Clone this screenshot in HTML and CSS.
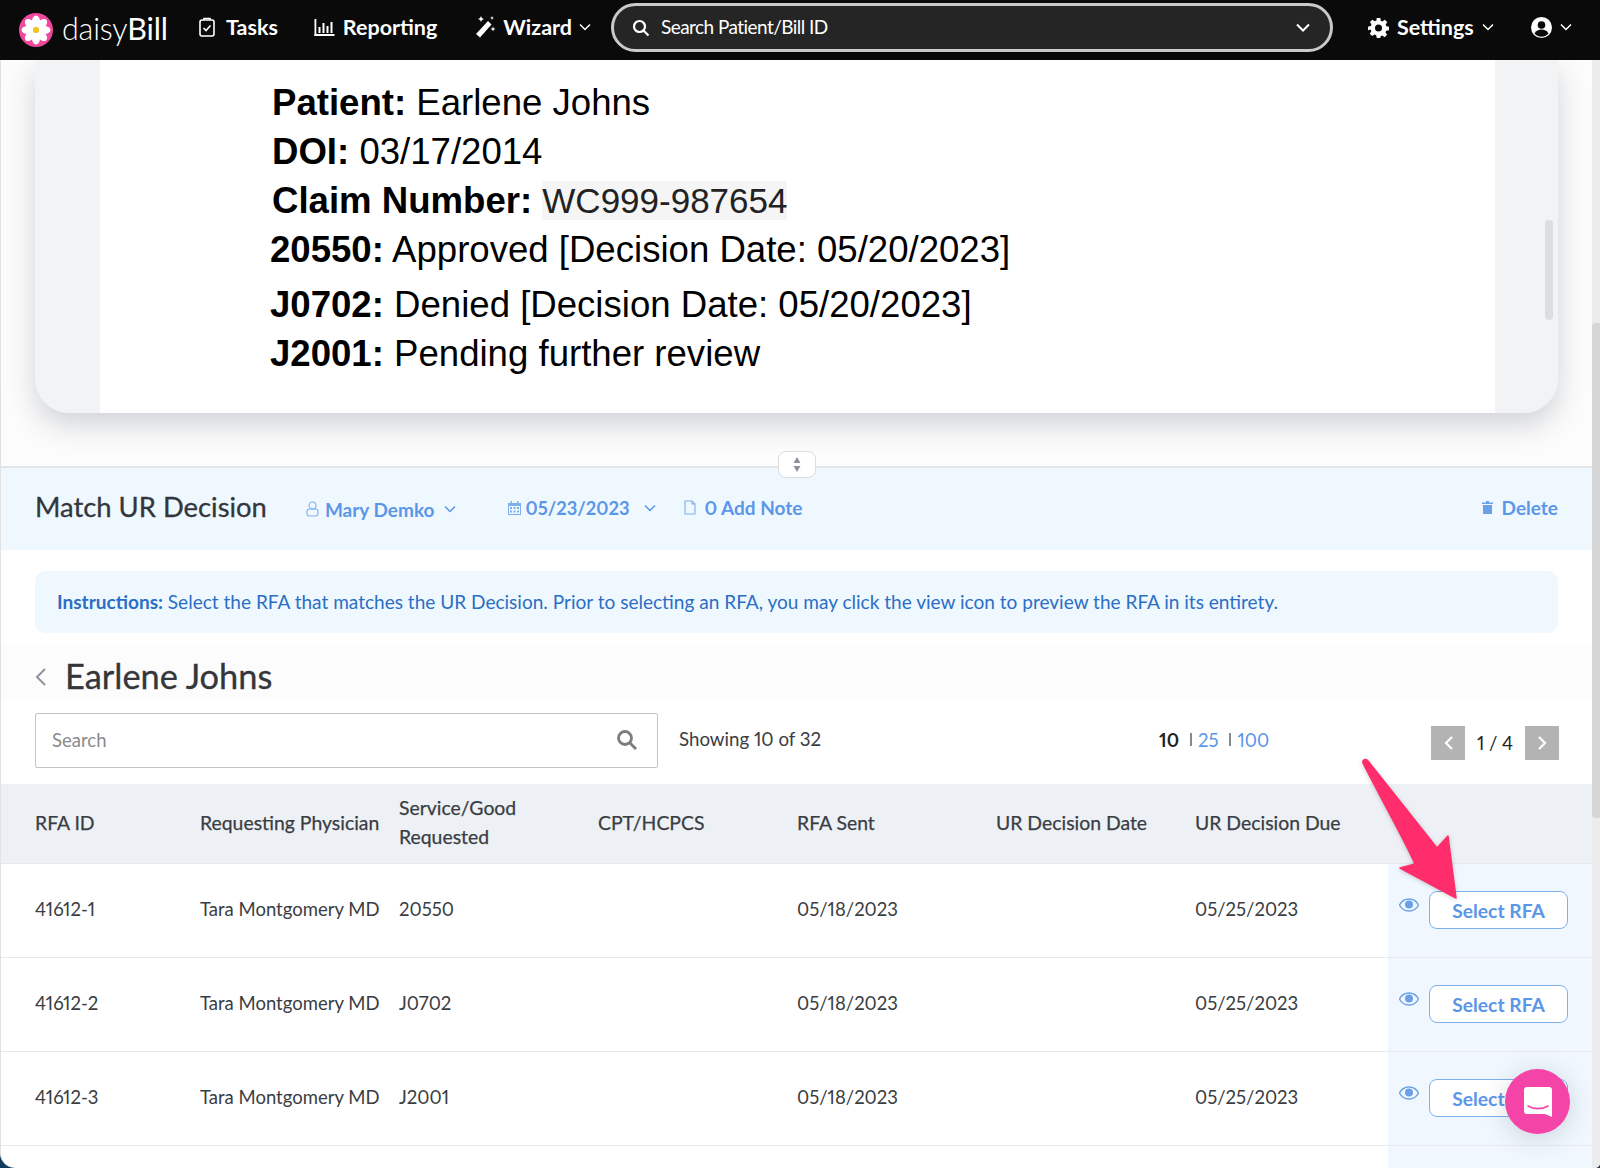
FILE: index.html
```html
<!DOCTYPE html>
<html lang="en">
  <head>
    <meta charset="UTF-8" />
    <meta name="viewport" content="width=device-width, initial-scale=1.0" />
    <title>Match UR Decision</title>
    <link rel="stylesheet" href="styles.css">
  </head>
  <body>
    <nav class="topnav">
      <a class="brand">
        <svg class="brand-logo" viewBox="0 0 34 34">
          <circle cx="17" cy="17" r="17" fill="#f0489f" />
          <g fill="#fff">
            <ellipse cx="17" cy="8.5" rx="4" ry="6" />
            <ellipse cx="17" cy="8.5" rx="4" ry="6" transform="rotate(45 17 17)" />
            <ellipse cx="17" cy="8.5" rx="4" ry="6" transform="rotate(90 17 17)" />
            <ellipse cx="17" cy="8.5" rx="4" ry="6" transform="rotate(135 17 17)" />
            <ellipse cx="17" cy="8.5" rx="4" ry="6" transform="rotate(180 17 17)" />
            <ellipse cx="17" cy="8.5" rx="4" ry="6" transform="rotate(225 17 17)" />
            <ellipse cx="17" cy="8.5" rx="4" ry="6" transform="rotate(270 17 17)" />
            <ellipse cx="17" cy="8.5" rx="4" ry="6" transform="rotate(315 17 17)" />
          </g>
          <circle cx="17" cy="17" r="3" fill="#f5c518" />
        </svg>
        <span class="brand-name">daisy<b>Bill</b></span>
      </a>
      <a class="nav-link nav-tasks">
        <svg width="16" height="20" viewBox="0 0 16 20" fill="none" stroke="#fff" stroke-width="1.6"><rect x="1" y="3" width="14" height="16" rx="2" /><path d="M5 3V1.5h6V3" /><path d="M4.5 11l2.5 2.5 4.500-5" /></svg>
        Tasks
      </a>
      <a class="nav-link nav-reporting">
        <svg width="21" height="17" viewBox="0 0 20 17" fill="#fff"><rect x="0" y="0" width="1.800" height="17" /><rect x="0" y="15" width="20" height="2" /><rect x="4" y="8" width="2" height="6" /><rect x="8" y="4" width="2" height="10" /><rect x="12" y="7" width="2" height="7" /><rect x="16" y="3" width="2" height="11" /></svg>
        Reporting
      </a>
      <a class="nav-link nav-wizard">
        <svg width="22" height="22" viewBox="0 0 22 22" fill="#fff"><path d="M14 5l3.500 3.500L6 21.500 2 18z" /><path d="M7 0l.9 2.100L10 3l-2.100.9L7 6l-.9-2.100L4 3l2.100-.9zM18 0l.6 1.400L20 2l-1.400.6L18 4l-.6-1.400L16 2l1.400-.6zM19 10.500l.7 1.800 1.800.7-1.800.7-.7 1.800-.7-1.800-1.800-.7 1.800-.7z" /></svg>
        Wizard
        <svg class="chev" width="12" height="8" viewBox="0 0 12 8"><path d="M1 1.500l5 5 5-5" /></svg>
      </a>
      <div class="nav-search">
        <svg width="18" height="18" viewBox="0 0 18 18" fill="none" stroke="#fff" stroke-width="2.200"><circle cx="7.500" cy="7.500" r="5.500" /><path d="M11.500 11.500l5 5" /></svg>
        <span class="nav-search-text">Search Patient/Bill ID</span>
        <svg class="chev chev-big" width="14" height="9" viewBox="0 0 14 9"><path d="M1 1.500l6 6 6-6" /></svg>
      </div>
      <a class="nav-link nav-settings">
        <svg width="21" height="21" viewBox="0 0 24 24" fill="#fff"><path fill-rule="evenodd" d="M10 1h4l.6 3.200 1.900.8 2.700-1.800 2.800 2.800-1.800 2.700.8 1.900L24 11v4l-3.200.6-.8 1.900 1.800 2.700-2.800 2.800-2.700-1.800-1.900.8L14 24h-4l-.6-3.200-1.900-.8-2.700 1.800-2.800-2.800 1.800-2.700-.8-1.900L0 15v-4l3.200-.6.8-1.900L2.200 5.800 5 3l2.700 1.800 1.900-.8zM12 8.500a4 4 0 1 0 0 8 4 4 0 0 0 0-8z" /></svg>
        Settings
        <svg class="chev" width="12" height="8" viewBox="0 0 12 8"><path d="M1 1.500l5 5 5-5" /></svg>
      </a>
      <a class="nav-link nav-user">
        <svg width="21" height="21" viewBox="0 0 21 21"><circle cx="10.500" cy="10.500" r="10.500" fill="#fff" /><circle cx="10.500" cy="8" r="3.800" fill="#0a0a0a" /><path d="M3.500 16.500c1.500-3 4-4 7-4s5.500 1 7 4c-2 2.200-4.500 3.200-7 3.200s-5-1-7-3.200z" fill="#0a0a0a" /></svg>
        <svg class="chev" width="12" height="8" viewBox="0 0 12 8"><path d="M1 1.500l5 5 5-5" /></svg>
      </a>
    </nav>

    <main class="page">
      <section class="doc-wrap">
        <div class="doc-card">
          <div class="doc-page">
            <p class="doc-line doc-l1"><b>Patient:</b> Earlene Johns</p>
            <p class="doc-line doc-l2"><b>DOI:</b> 03/17/2014</p>
            <p class="doc-line doc-l3"><b>Claim Number:</b> <span class="doc-mark">WC999-987654</span></p>
            <p class="doc-line doc-l4"><b>20550:</b> Approved [Decision Date: 05/20/2023]</p>
            <p class="doc-line doc-l5"><b>J0702:</b> Denied [Decision Date: 05/20/2023]</p>
            <p class="doc-line doc-l6"><b>J2001:</b> Pending further review</p>
          </div>
          <div class="doc-side"><span class="doc-thumb"></span></div>
        </div>
      </section>

      <section class="match-bar">
        <span class="resize-handle">
          <svg width="8" height="15" viewBox="0 0 8 15" fill="#8d939c"><path d="M4 0l3.500 6h-7zM4 15L.5 9h7z" /></svg>
        </span>
        <h2 class="match-title">Match UR Decision</h2>
        <a class="match-link match-user">
          <svg width="13" height="16" viewBox="0 0 13 16" fill="none" stroke="#7fb0ee" stroke-width="1.100"><circle cx="6.500" cy="4.500" r="3.500" /><rect x="1" y="8" width="11" height="7" rx="2.500" /></svg>
          <span>Mary Demko</span>
          <svg class="chev-blue" width="12" height="8" viewBox="0 0 12 8"><path d="M1 1.500l5 5 5-5" /></svg>
        </a>
        <a class="match-link match-date">
          <svg width="13" height="14" viewBox="0 0 13 14" fill="#7fb0ee"><path d="M0 2h13v12H0zM1 5v8h11V5z" /><rect x="2.500" y="0" width="1.500" height="3" /><rect x="9" y="0" width="1.500" height="3" /><path d="M2 6h2v2H2zM5.500 6h2v2h-2zM9 6h2v2H9zM2 9.500h2v2H2zM5.500 9.500h2v2h-2zM9 9.500h2v2H9z" /></svg>
          <span>05/23/2023</span>
          <svg class="chev-blue chev-date" width="12" height="8" viewBox="0 0 12 8"><path d="M1 1.500l5 5 5-5" /></svg>
        </a>
        <a class="match-link match-note">
          <svg width="12" height="15" viewBox="0 0 12 15" fill="none" stroke="#7fb0ee" stroke-width="1.100"><path d="M1 1h7l3 3v10H1z" /><path d="M8 1v3h3" /></svg>
          <span>0 Add Note</span>
        </a>
        <a class="match-link match-delete">
          <svg width="11" height="13" viewBox="0 0 11 13" fill="#6b9fe8"><path d="M4 0h3v1.500h4V3H0V1.500h4zM1 4h9v9H1z" /></svg>
          <span>Delete</span>
        </a>
      </section>

      <section class="instructions">
        <b>Instructions:</b> Select the RFA that matches the UR Decision. Prior to selecting an RFA, you may click the view icon to preview the RFA in its entirety.
      </section>

      <header class="patient-head">
        <svg width="13" height="20" viewBox="0 0 13 20" fill="none" stroke="#8d939c" stroke-width="2"><path d="M11 2L3 10l8 8" /></svg>
        <h1>Earlene Johns</h1>
      </header>

      <section class="toolbar">
        <div class="search-box">
          <span class="search-ph">Search</span>
          <svg width="22" height="22" viewBox="0 0 22 22" fill="none" stroke="#7c7c7c" stroke-width="2.800"><circle cx="9" cy="9" r="6.500" /><path d="M14 14l6 6" /></svg>
        </div>
        <span class="showing">Showing 10 of 32</span>
        <div class="page-sizes"><b>10</b><i></i><a>25</a><i></i><a>100</a></div>
        <div class="pager">
          <button type="button" class="pager-btn"><svg width="11" height="16" viewBox="0 0 11 16" fill="none" stroke="#fff" stroke-width="2.200"><path d="M9 2L3 8l6 6" /></svg></button>
          <span class="pager-count">1 / 4</span>
          <button type="button" class="pager-btn"><svg width="11" height="16" viewBox="0 0 11 16" fill="none" stroke="#fff" stroke-width="2.200"><path d="M2 2l6 6-6 6" /></svg></button>
        </div>
      </section>

      <table class="rfa-table">
        <colgroup>
          <col class="col-id" /><col class="col-std" /><col class="col-std" /><col class="col-std" /><col class="col-std" /><col class="col-std" /><col class="col-due" /><col class="col-act" />
        </colgroup>
        <thead>
          <tr>
            <th>RFA ID</th>
            <th>Requesting Physician</th>
            <th>Service/Good<br />Requested</th>
            <th>CPT/HCPCS</th>
            <th>RFA Sent</th>
            <th>UR Decision Date</th>
            <th>UR Decision Due</th>
            <th></th>
          </tr>
        </thead>
        <tbody>
          <tr>
            <td>41612-1</td><td>Tara Montgomery MD</td><td>20550</td><td></td><td>05/18/2023</td><td></td><td>05/25/2023</td>
            <td class="act-cell"><div class="act-wrap"><svg class="eye" width="20" height="14" viewBox="0 0 20 14"><path d="M10 1C5.500 1 2 4 .5 7 2 10 5.500 13 10 13s8-3 9.500-6C18 4 14.500 1 10 1z" fill="none" stroke="#6b9fe8" stroke-width="1.400" /><circle cx="10" cy="6.500" r="4" fill="#6b9fe8" /></svg><button type="button" class="select-btn">Select RFA</button></div></td>
          </tr>
          <tr>
            <td>41612-2</td><td>Tara Montgomery MD</td><td>J0702</td><td></td><td>05/18/2023</td><td></td><td>05/25/2023</td>
            <td class="act-cell"><div class="act-wrap"><svg class="eye" width="20" height="14" viewBox="0 0 20 14"><path d="M10 1C5.500 1 2 4 .5 7 2 10 5.500 13 10 13s8-3 9.500-6C18 4 14.500 1 10 1z" fill="none" stroke="#6b9fe8" stroke-width="1.400" /><circle cx="10" cy="6.500" r="4" fill="#6b9fe8" /></svg><button type="button" class="select-btn">Select RFA</button></div></td>
          </tr>
          <tr>
            <td>41612-3</td><td>Tara Montgomery MD</td><td>J2001</td><td></td><td>05/18/2023</td><td></td><td>05/25/2023</td>
            <td class="act-cell"><div class="act-wrap"><svg class="eye" width="20" height="14" viewBox="0 0 20 14"><path d="M10 1C5.500 1 2 4 .5 7 2 10 5.500 13 10 13s8-3 9.500-6C18 4 14.500 1 10 1z" fill="none" stroke="#6b9fe8" stroke-width="1.400" /><circle cx="10" cy="6.500" r="4" fill="#6b9fe8" /></svg><button type="button" class="select-btn">Select RFA</button></div></td>
          </tr>
          <tr class="row-cut">
            <td colspan="7"></td><td class="act-cell"></td>
          </tr>
        </tbody>
      </table>
      <div class="page-scroll"><span class="page-thumb"></span></div>
    </main>

    <svg class="callout-arrow" width="110" height="150" viewBox="0 0 110 150">
      <path d="M5 5C4 2 8 0 10 3L79 90 90 78 98 140 42 110 57 106C46 81 24 43 5 5z" fill="#ff2d6b" stroke="#ff2d6b" stroke-width="1.500" stroke-linejoin="round" />
    </svg>

    <a class="chat-bubble">
      <svg width="30" height="32" viewBox="0 0 30 32"><path d="M4 1h22a3 3 0 0 1 3 3v27l-7-3H4a3 3 0 0 1-3-3V4a3 3 0 0 1 3-3z" fill="#fff" /><path d="M5 20c6 3.500 14 3.500 20 0" fill="none" stroke="#f544a8" stroke-width="1.600" stroke-linecap="round" /></svg>
    </a>
  </body>
</html>
```
FILE: styles.css
```css
* {
  box-sizing: border-box;
}

html,
body {
  height: 100%;
  margin: 0;
  overflow: hidden;
}

body {
  font-family: Lato, "Noto Sans", sans-serif;
  font-variant-numeric: proportional-nums;
  color: #3a3d42;
  background: #123a5c;
}

b {
  font-weight: 700;
}

/* top nav */
.topnav {
  display: flex;
  align-items: center;
  height: 60px;
  background: #0a0a0a;
  color: #fff;
  padding-left: 19px;
}

.brand {
  display: flex;
  align-items: center;
  gap: 9px;
  width: 149px;
}

.brand-logo {
  width: 34px;
  height: 34px;
}

.brand-name {
  padding-bottom: 5px;
  font-size: 30.500px;
  font-weight: 300;
  letter-spacing: -0.2px;
}

.brand-name b {
  font-weight: 400;
}

.nav-link {
  display: flex;
  align-items: center;
  gap: 8px;
  padding-bottom: 6px;
  font-size: 21.500px;
  font-weight: 700;
  white-space: nowrap;
}

.nav-tasks {
  margin-left: 31px;
  gap: 11px;
}

.nav-reporting {
  margin-left: 36px;
}

.nav-wizard {
  margin-left: 37px;
  gap: 7px;
}

.chev path {
  fill: none;
  stroke: #fff;
  stroke-width: 1.500;
}

.nav-search {
  position: absolute;
  left: 611px;
  top: 3px;
  display: flex;
  align-items: center;
  width: 722px;
  height: 49px;
  padding: 0 20px 0 18px;
  background: #252525;
  border: 3px solid #c9c9c9;
  border-radius: 25px;
}

.nav-search-text {
  flex: 1;
  margin-left: 11px;
  padding-bottom: 2px;
  font-size: 19px;
  letter-spacing: -0.550px;
}

.chev-big path {
  stroke-width: 2;
}

.nav-settings {
  margin-left: 777px;
}

.nav-user {
  margin-left: 37px;
}

/* page */
.page {
  position: relative;
  height: 1108px;
  overflow: hidden;
  padding-right: 8px;
  background: #fff;
  border-left: 1px solid #e2e2e2;
  border-radius: 0 0 5px 15px;
}

.doc-wrap {
  height: 408px;
  padding: 0 34px 0 34px;
  background: #fcfcfc;
  border-bottom: 2px solid #e3e4e6;
}

.doc-card {
  display: flex;
  height: 353px;
  padding-left: 65px;
  background: #f2f3f5;
  border-radius: 0 0 34px 34px;
  box-shadow: 0 12px 28px rgba(60, 70, 85, 0.22);
}

.doc-page {
  width: 1395px;
  padding-left: 172px;
  padding-top: 18px;
  background: #fff;
  color: #000;
  font-family: "Liberation Sans", Arial, sans-serif;
  font-size: 36.600px;
}

.doc-line {
  margin: 0;
  line-height: 49px;
  white-space: nowrap;
}

.doc-l4,
.doc-l5,
.doc-l6 {
  margin-left: -2px;
}

.doc-l5 {
  margin-top: 6px;
}

.doc-mark {
  color: #222;
  background: #f5f5f5;
  font-size: 35px;
}

.doc-side {
  flex: 1;
  position: relative;
}

.doc-thumb {
  position: absolute;
  top: 160px;
  right: 5px;
  width: 8px;
  height: 100px;
  border-radius: 4px;
  background: #dcdde0;
}

/* match bar */
.match-bar {
  position: relative;
  display: flex;
  align-items: center;
  height: 82px;
  padding: 0 34px 3px;
  background: #f0f8ff;
  color: #5b97e8;
}

.resize-handle {
  position: absolute;
  left: 777px;
  top: -17px;
  display: flex;
  align-items: center;
  justify-content: center;
  width: 38px;
  height: 27px;
  background: #fff;
  border: 1px solid #d9dce0;
  border-radius: 8px;
}

.match-title {
  margin: 0 0 2px;
  color: #33363b;
  font-size: 27.400px;
  font-weight: 400;
  -webkit-text-stroke: 0.300px #33363b;
}

.match-link {
  display: flex;
  align-items: center;
  gap: 6px;
  font-size: 19px;
  font-weight: 700;
}

.match-user {
  margin-left: 39px;
  padding-top: 3px;
}

.match-date {
  margin-left: 52px;
  gap: 4px;
}

.match-date span {
  font-size: 18.300px;
}

.match-note {
  margin-left: 28px;
  gap: 8px;
}

.match-delete {
  margin-left: auto;
  gap: 9px;
}

.chev-blue {
  margin-left: 4px;
}

.chev-blue path {
  fill: none;
  stroke: #5b97e8;
  stroke-width: 1.500;
}

.chev-date {
  margin-left: 11px;
}

.instructions {
  height: 62px;
  margin: 21px 34px 0;
  padding-left: 22px;
  display: block;
  line-height: 61px;
  background: #f0f8ff;
  border-radius: 10px;
  color: #2a6fc4;
  font-size: 19.060px;
}

.patient-head {
  display: flex;
  align-items: center;
  height: 56px;
  margin-top: 11px;
  padding-left: 33px;
  padding-top: 10px;
  gap: 18px;
  background: #fcfcfc;
}

.patient-head h1 {
  margin: -4px 0 0;
  color: #33363b;
  font-size: 34.400px;
  font-weight: 400;
  -webkit-text-stroke: 0.300px #33363b;
}

/* search row */
.toolbar {
  display: flex;
  align-items: center;
  height: 84px;
  padding-left: 34px;
  padding-bottom: 3px;
}

.search-box {
  display: flex;
  align-items: center;
  justify-content: space-between;
  width: 623px;
  height: 55px;
  padding: 0 19px 2px 16px;
  border: 1px solid #c4c4c4;
  border-radius: 2px;
}

.search-ph {
  color: #8a8a8a;
  font-size: 18.500px;
}

.showing {
  width: 480px;
  margin-left: 21px;
  padding-bottom: 3px;
  font-size: 18.700px;
}

.page-sizes {
  display: flex;
  align-items: center;
  width: 272px;
  padding-bottom: 2px;
  font-size: 18.500px;
  color: #5b97e8;
}

.page-sizes b {
  color: #222;
}

.page-sizes i {
  width: 2px;
  height: 13px;
  margin: 0 6px 0 11px;
  background: #888;
}

.pager {
  display: flex;
  align-items: center;
  margin-top: 4px;
}

.pager-btn {
  display: flex;
  align-items: center;
  justify-content: center;
  width: 34px;
  height: 34px;
  padding: 0;
  background: #b3b3b3;
  border: none;
}

.pager-count {
  width: 60px;
  text-align: center;
  font-size: 18.500px;
  color: #222;
}

/* table */
.rfa-table {
  width: 1591px;
  table-layout: fixed;
  border-collapse: collapse;
  font-size: 18.500px;
}

.col-id {
  width: 199px;
}

.col-std {
  width: 199px;
}

.col-due {
  width: 193px;
}

.col-act {
  width: 204px;
}

.rfa-table th {
  height: 79px;
  padding: 0 0 2px;
  background: #edf1f6;
  border-bottom: 1px solid #e5e8ec;
  color: #3a3d42;
  font-size: 19.400px;
  font-weight: 400;
  line-height: 29px;
  text-align: left;
  -webkit-text-stroke: 0.250px #3a3d42;
  white-space: nowrap;
}

.rfa-table td {
  height: 94px;
  padding: 0 0 2px;
  border-bottom: 1px solid #e8e9eb;
  white-space: nowrap;
}

.rfa-table th:first-child,
.rfa-table td:first-child {
  padding-left: 34px;
}

.rfa-table .act-cell {
  padding-bottom: 0;
  background: #f0f7fe;
}

.act-wrap {
  display: flex;
  align-items: center;
  padding-left: 11px;
  gap: 10px;
}

.eye {
  margin-top: -11px;
}

.select-btn {
  width: 139px;
  height: 38px;
  padding: 0;
  background: #fff;
  border: 1px solid #7fb0ee;
  border-radius: 8px;
  color: #5b97e8;
  font-family: inherit;
  font-size: 19.300px;
  font-weight: 700;
}

.page-scroll {
  position: absolute;
  top: 0;
  right: 0;
  bottom: 0;
  width: 8px;
  background: #ececec;
}

.page-thumb {
  display: block;
  height: 495px;
  margin-top: 263px;
  background: #d6d6d6;
  border-radius: 4px 0 0 4px;
}

/* overlays */
.callout-arrow {
  position: absolute;
  left: 1358px;
  top: 758px;
  filter: drop-shadow(0 1px 2px rgba(0, 0, 0, 0.2));
}

.chat-bubble {
  position: absolute;
  left: 1505px;
  top: 1069px;
  display: flex;
  align-items: center;
  justify-content: center;
  width: 65px;
  height: 65px;
  background: #f544a8;
  border-radius: 50%;
  box-shadow: 0 4px 24px rgba(60, 70, 85, 0.2);
}
```
